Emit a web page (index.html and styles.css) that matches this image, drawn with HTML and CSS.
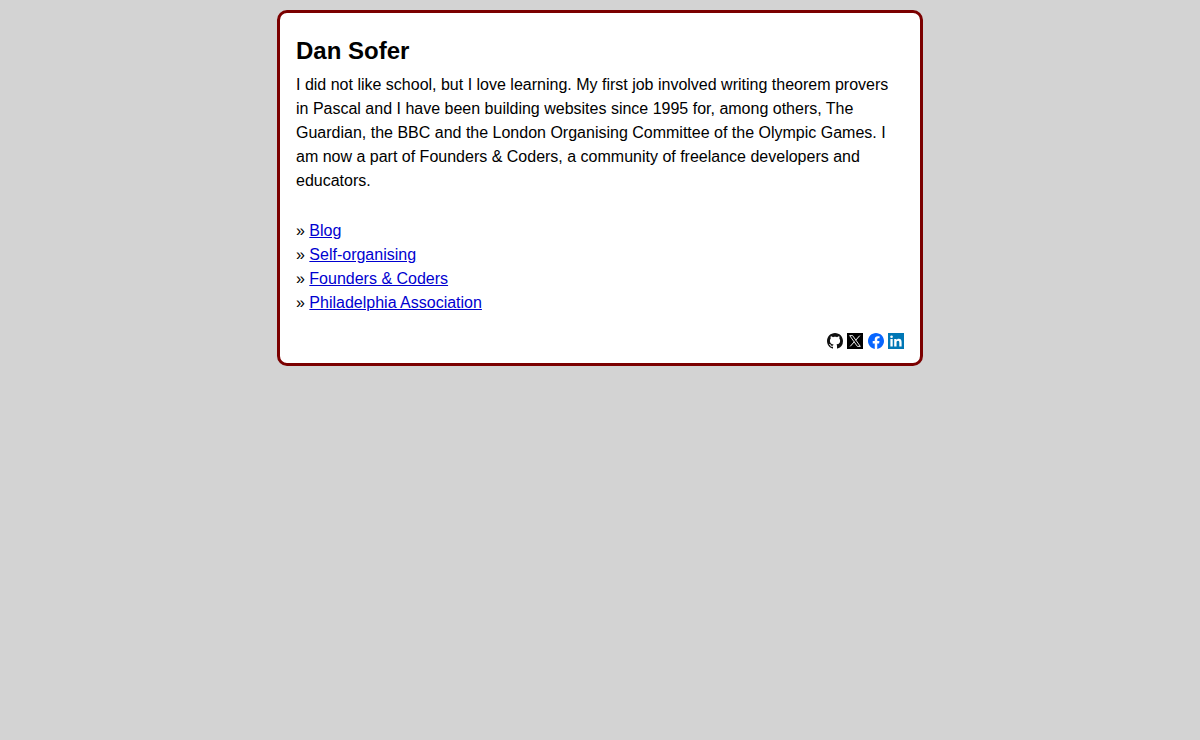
FILE: index.html
```html
<!DOCTYPE html>
<html lang="en">
<head>
  <meta charset="UTF-8">
  <meta name="viewport" content="width=device-width, initial-scale=1.0">
  <title>Dan Sofer</title>
  <link rel="stylesheet" href="styles.css">
</head>
<body>
  <div class="card">
    <h1>Dan Sofer</h1>
    <p class="bio">I did not like school, but I love learning. My first job involved writing theorem provers in Pascal and I have been building websites since 1995 for, among others, The Guardian, the BBC and the London Organising Committee of the Olympic Games. I am now a part of Founders &amp; Coders, a community of freelance developers and educators.</p>
    <ul class="links">
      <li>» <a href="#">Blog</a></li>
      <li>» <a href="#">Self-organising</a></li>
      <li>» <a href="#">Founders &amp; Coders</a></li>
      <li>» <a href="#">Philadelphia Association</a></li>
    </ul>
    <div class="social">
      <!-- GitHub -->
      <a href="#" aria-label="GitHub">
        <svg viewBox="0 0 16 16" width="16" height="16"><path fill="#111" d="M8 0C3.58 0 0 3.58 0 8c0 3.54 2.29 6.53 5.47 7.59.4.07.55-.17.55-.38 0-.19-.01-.82-.01-1.49-2.01.37-2.53-.49-2.69-.94-.09-.23-.48-.94-.82-1.13-.28-.15-.68-.52-.01-.53.63-.01 1.08.58 1.23.82.72 1.21 1.87.87 2.33.66.07-.52.28-.87.51-1.07-1.78-.2-3.64-.89-3.64-3.95 0-.87.31-1.59.82-2.15-.08-.2-.36-1.02.08-2.12 0 0 .67-.21 2.2.82.64-.18 1.32-.27 2-.27s1.36.09 2 .27c1.53-1.04 2.2-.82 2.2-.82.44 1.1.16 1.92.08 2.12.51.56.82 1.27.82 2.15 0 3.07-1.87 3.75-3.65 3.95.29.25.54.73.54 1.48 0 1.07-.01 1.93-.01 2.2 0 .21.15.46.55.38A8.01 8.01 0 0 0 16 8c0-4.42-3.58-8-8-8z"/></svg>
      </a>
      <!-- X -->
      <a href="#" aria-label="X">
        <svg viewBox="0 0 16 16" width="16" height="16"><rect width="16" height="16" fill="#000"/><path fill="none" stroke="#fff" stroke-width=".9" d="M2.7 2.6h2.9l7.7 10.8h-2.9z"/><path fill="none" stroke="#fff" stroke-width="1" d="M12.8 2.6 8.6 7.3M7.4 8.7 3.2 13.4"/></svg>
      </a>
      <!-- Facebook -->
      <a href="#" aria-label="Facebook">
        <svg viewBox="0 0 16 16" width="16" height="16"><path fill="#0866ff" d="M16 8.05C16 3.6 12.42 0 8 0S0 3.6 0 8.05c0 4.02 2.93 7.35 6.75 7.95v-5.62H4.72V8.05h2.03V6.27c0-2.02 1.2-3.13 3.02-3.13.88 0 1.79.16 1.79.16v1.98h-1.01c-1 0-1.31.62-1.31 1.26v1.51h2.22l-.35 2.33H9.24V16C13.07 15.4 16 12.07 16 8.05z"/></svg>
      </a>
      <!-- LinkedIn -->
      <a href="#" aria-label="LinkedIn">
        <svg viewBox="0 0 16 16" width="16" height="16"><rect width="16" height="16" fill="#0077b5"/><path fill="#fff" d="M2.4 6h2.3v7.6H2.4zM3.55 2.4a1.33 1.33 0 1 1 0 2.66 1.33 1.33 0 0 1 0-2.66zM6.2 6h2.2v1.05c.35-.65 1.15-1.25 2.35-1.25 2.4 0 2.85 1.55 2.85 3.6v4.2h-2.3V9.85c0-.9-.02-2-1.25-2s-1.5.95-1.5 1.95v3.8H6.2z"/></svg>
      </a>
    </div>
  </div>
</body>
</html>
```

FILE: styles.css
```css
body {
  margin: 0;
  padding: 10px 0;
  background-color: #d3d3d3;
  font-family: "Liberation Sans", Arial, sans-serif;
  font-size: 16px;
  line-height: 24px;
  color: #000;
}
.card {
  width: 608px;
  margin: 0 auto;
  padding: 16px 16px 14px;
  background: #fff;
  border: 3px solid #7b0000;
  border-radius: 10px;
}
h1 {
  margin: 8px 0;
  font-size: 24px;
  line-height: 28px;
}
.bio {
  margin: 0 0 26px;
}
.links {
  margin: 0;
  padding: 0;
  list-style: none;
}
.links a {
  color: #0000d0;
}
.social {
  display: flex;
  justify-content: flex-end;
  gap: 4.45px;
  margin-top: 18px;
}
.social a {
  display: block;
  width: 16px;
  height: 16px;
}
.social svg {
  display: block;
}
```
